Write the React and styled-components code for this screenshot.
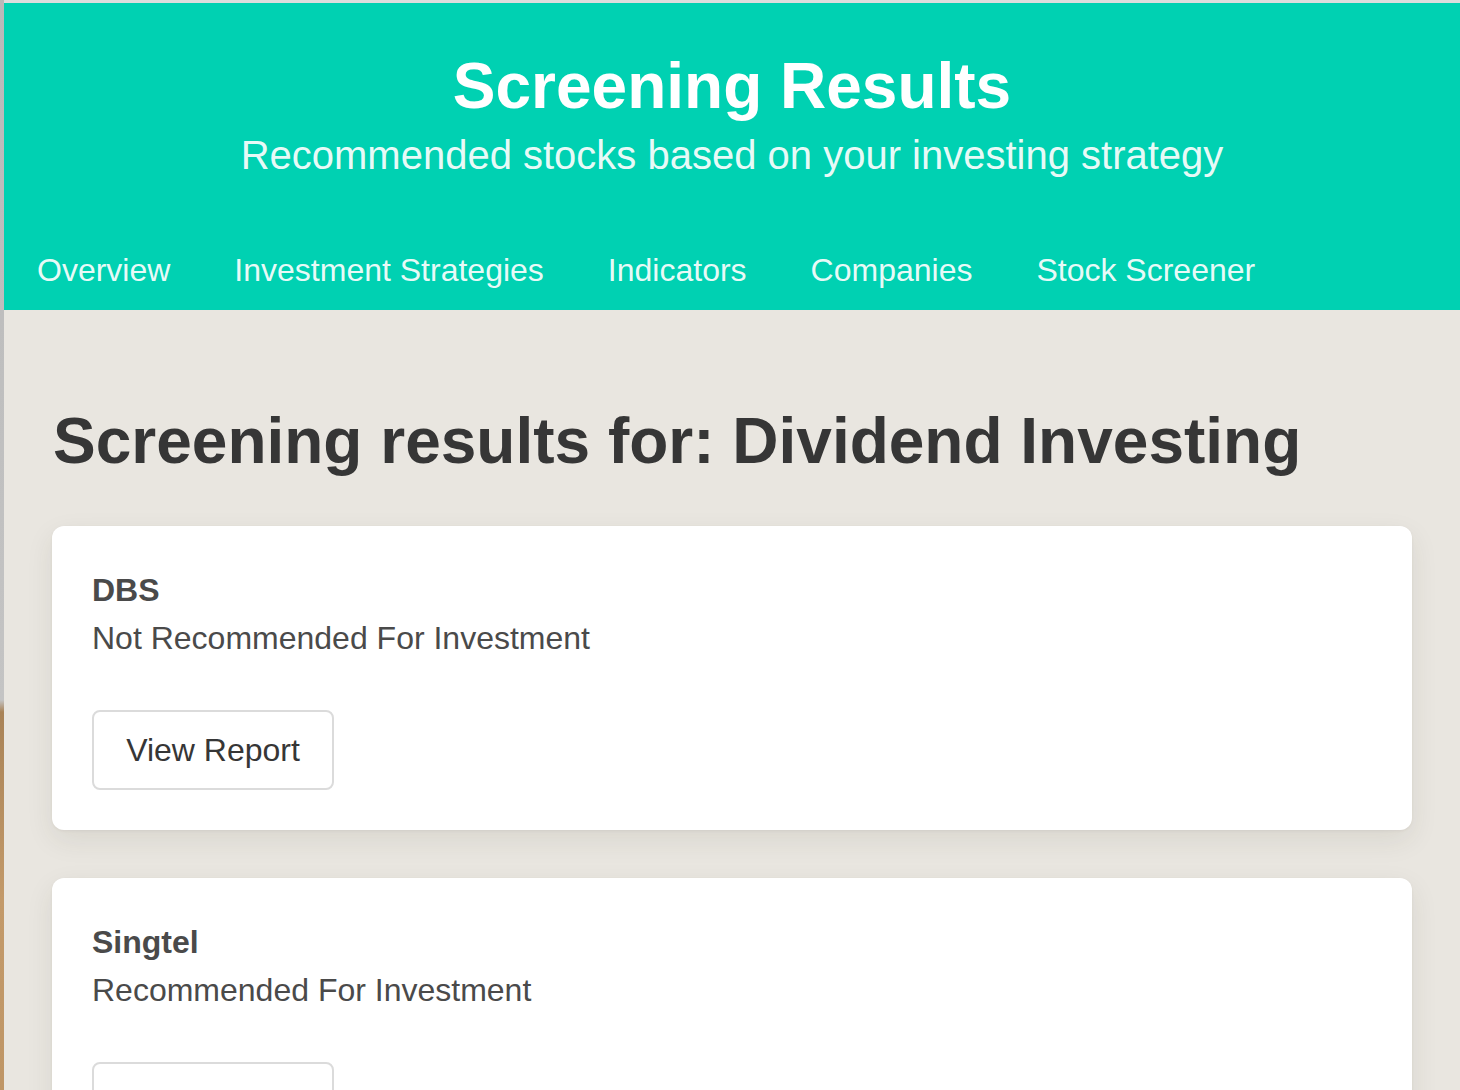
import React from 'react';
import styled, { createGlobalStyle } from 'styled-components';

const GlobalStyle = createGlobalStyle`
  html, body {
    margin: 0;
    padding: 0;
    background: #e9e6e0;
  }
  body {
    font-family: "Liberation Sans", Arial, Helvetica, sans-serif;
    color: #4a4a4a;
  }
  * {
    box-sizing: border-box;
  }
`;

const Frame = styled.div`
  display: flex;
  min-height: 100vh;
`;

// strip of the window behind, seen at the left edge of the capture
const Edge = styled.div`
  width: 4px;
  flex: none;
  background: linear-gradient(#b9b9b9 0, #c4c4c4 700px, #a98357 712px, #c39a6a 900px, #b48b5c 100%);
`;

const Page = styled.div`
  flex: 1;
  min-width: 0;
  border-top: 3px solid #dddddd;
`;

const Hero = styled.header`
  background: #00d1b2;
  color: #fff;
`;

const HeroBody = styled.div`
  padding: 47px 24px 50px;
  text-align: center;
`;

const Title = styled.h1`
  margin: 0;
  font-size: 64px;
  line-height: 72px;
  font-weight: 700;
  color: #fff;
`;

const Subtitle = styled.p`
  margin: 8px 0 0;
  font-size: 40px;
  line-height: 50px;
  color: rgba(255, 255, 255, 0.92);
`;

const Tabs = styled.ul`
  display: flex;
  margin: 0;
  padding: 0 0 0 1px;
  list-style: none;
`;

const Tab = styled.li`
  padding: 16px 32px;
  font-size: 32px;
  line-height: 48px;
  color: rgba(255, 255, 255, 0.92);
  cursor: pointer;
`;

const Section = styled.main`
  padding: 95px 48px 48px;
`;

const Heading = styled.h2`
  margin: 0 0 49px 1px;
  font-size: 64px;
  line-height: 72px;
  font-weight: 700;
  color: #363636;
`;

const CardList = styled.div`
  display: flex;
  flex-direction: column;
  gap: 48px;
`;

const Card = styled.section`
  background: #fff;
  border-radius: 12px;
  padding: 40px;
  box-shadow: 0 10px 28px rgba(60, 50, 30, 0.09), 0 1px 3px rgba(60, 50, 30, 0.06);
`;

const Company = styled.h3`
  margin: 0;
  font-size: 32px;
  line-height: 48px;
  font-weight: 700;
  color: #4a4a4a;
`;

const Verdict = styled.p`
  margin: 0 0 48px;
  font-size: 32px;
  line-height: 48px;
  color: #4a4a4a;
`;

const ReportButton = styled.button`
  display: block;
  width: 242px;
  height: 80px;
  padding: 0;
  background: #fff;
  border: 2px solid #dbdbdb;
  border-radius: 8px;
  font-family: inherit;
  font-size: 32px;
  color: #363636;
  cursor: pointer;
`;

const tabs = ['Overview', 'Investment Strategies', 'Indicators', 'Companies', 'Stock Screener'];

const results = [
  { name: 'DBS', recommended: false },
  { name: 'Singtel', recommended: true },
  { name: 'OCBC', recommended: true },
];

export default function App() {
  return (
    <>
      <GlobalStyle />
      <Frame>
        <Edge />
        <Page>
          <Hero>
            <HeroBody>
              <Title>Screening Results</Title>
              <Subtitle>Recommended stocks based on your investing strategy</Subtitle>
            </HeroBody>
            <Tabs>
              {tabs.map((t) => (
                <Tab key={t}>{t}</Tab>
              ))}
            </Tabs>
          </Hero>
          <Section>
            <Heading>Screening results for: Dividend Investing</Heading>
            <CardList>
              {results.map((r) => (
                <Card key={r.name}>
                  <Company>{r.name}</Company>
                  <Verdict>{r.recommended ? 'Recommended For Investment' : 'Not Recommended For Investment'}</Verdict>
                  <ReportButton type="button">View Report</ReportButton>
                </Card>
              ))}
            </CardList>
          </Section>
        </Page>
      </Frame>
    </>
  );
}
